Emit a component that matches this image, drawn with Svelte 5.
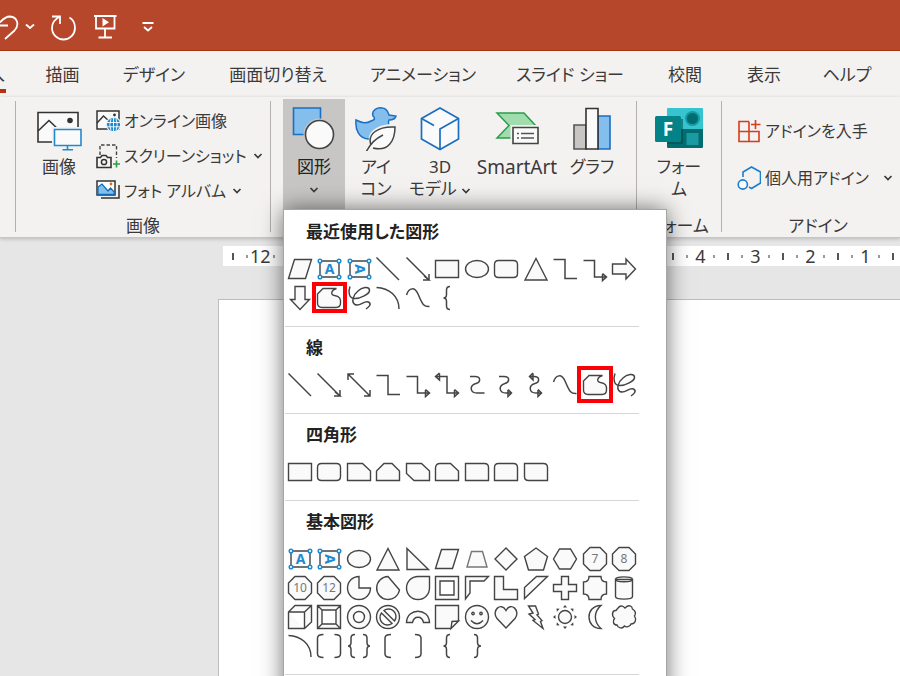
<script>
  const circle = (cx, cy, r) => `M${cx - r} ${cy}a${r} ${r} 0 1 0 ${r * 2} 0a${r} ${r} 0 1 0 ${-r * 2} 0Z`

  const OCTAGON = 'M8 1.5H18L24.5 8V18L18 24.5H8L1.5 18V8Z'

  // open outlines, drawn without a fill
  const lines = {
    line: 'M1.5 1.5L24 24',
    arrow: 'M1.5 1.5L24 24M24 18V24H18L24 24L19 20',
    doubleArrow: 'M2 2L24 24M24 18V24H18M2 8V2H8',
    elbow: 'M1.5 3.5H13V22.5H25',
    elbowArrow: 'M1.5 4.5H12.5V21H24M20.5 17.5L24.5 21L20.5 24.5V18',
    elbowDouble: 'M2 4.5H13V21H24M20.5 17.5L24.5 21L20.5 24.5V18M5.5 1L1.5 4.5L5.5 8V1.5',
    curved: 'M6 4.5H11C17 4.5 17 10 12 11.5C5 13.5 6 21 13 21H20.5',
    curvedArrow: 'M6 4.5H11C17 4.5 17 10 12 11.5C5 13.5 6 21 13 21H18M15 17.5L18.5 21L15 24.5V18',
    curvedDouble: 'M7 4.5H11C17 4.5 17 10 12 11.5C5 13.5 6 21 13 21H18M15 17.5L18.5 21L15 24.5V18M10 1L6.5 4.5L10 8V1.5',
    curve: 'M1.5 10C4 2 10 2 13 9C17 18 18 22 24.5 21.5',
    scribble: 'M4 1.5C2 7 3 13 8 13.5C14 14 24 9 23.5 5C23 1 16 2 12 6C7 10 5 17 9 19.5C14 22 18 15 22.5 17C26 19 23 22 20 24',
    arc: 'M1.5 2.5C14 3 24 11 24 24',
    bracketPair: 'M7.5 1.5Q1.5 1.5 1.5 5V21Q1.5 24.5 7.5 24.5M18.5 1.5Q24.5 1.5 24.5 5V21Q24.5 24.5 18.5 24.5',
    bracePair: 'M9 1.5Q5 1.5 5 5V9.5Q5 13 2 13Q5 13 5 16.5V21Q5 24.5 9 24.5M17 1.5Q21 1.5 21 5V9.5Q21 13 24 13Q21 13 21 16.5V21Q21 24.5 17 24.5',
    leftBracket: 'M16 1.5Q10 1.5 10 5V21Q10 24.5 16 24.5',
    rightBracket: 'M10 1.5Q16 1.5 16 5V21Q16 24.5 10 24.5',
    leftBrace: 'M16 1.5Q12.5 1.5 12.5 5V9.5Q12.5 13 9.5 13Q12.5 13 12.5 16.5V21Q12.5 24.5 16 24.5',
    rightBrace: 'M10 1.5Q13.5 1.5 13.5 5V9.5Q13.5 13 17 13Q13.5 13 13.5 16.5V21Q13.5 24.5 10 24.5'
  }

  const solids = {
    parallelogram: 'M7.5 3.5H24.5L18.5 22.5H1.5Z',
    rect: 'M1.5 4.5H24.5V21.5H1.5Z',
    ellipse: 'M1.5 13a11.5 8.5 0 1 0 23 0a11.5 8.5 0 1 0 -23 0Z',
    roundRect: 'M5.5 4.5H20.5Q24.5 4.5 24.5 8.5V17.5Q24.5 21.5 20.5 21.5H5.5Q1.5 21.5 1.5 17.5V8.5Q1.5 4.5 5.5 4.5Z',
    triangle: 'M13 2.5L24 24H2Z',
    rightArrow: 'M1.5 8H15V3L24.5 13L15 23V18H1.5Z',
    downArrow: 'M8 1.5H18V14.5H22.5L13 24.5L3.5 14.5H8Z',
    freeform: 'M1.5 9L7 3.5H20.5C14.5 5.5 14.5 10 18.5 10.5C23.5 11 25 14 24.5 18Q24.5 22.5 20 22.5H6Q1.5 22.5 1.5 18Z',
    snipOne: 'M1.5 4.5H16.5L24.5 12V21.5H1.5Z',
    snipTwo: 'M1.5 21.5V12L9 4.5H17L24.5 12V21.5Z',
    snipDiagonal: 'M1.5 4.5H16.5L24.5 12V21.5H9L1.5 14.5Z',
    snipRound: 'M1.5 21.5V9Q1.5 4.5 6 4.5H16.5L24.5 12V21.5Z',
    roundOne: 'M1.5 4.5H20.5Q24.5 4.5 24.5 8.5V21.5H1.5Z',
    roundTwo: 'M5.5 4.5H20.5Q24.5 4.5 24.5 8.5V21.5H1.5V8.5Q1.5 4.5 5.5 4.5Z',
    roundDiagonal: 'M1.5 4.5H20.5Q24.5 4.5 24.5 8.5V21.5H5.5Q1.5 21.5 1.5 17.5Z',
    rightTriangle: 'M2 2.5L23.5 23.5H2Z',
    trapezoid: 'M7.5 5.5H18.5L23 21H3Z',
    diamond: 'M13 2L24 13L13 24L2 13Z',
    pentagon: 'M13 2L24.5 10.5L20.5 24H5.5L1.5 10.5Z',
    hexagon: 'M7.5 3H18.5L24.5 13L18.5 23H7.5L1.5 13Z',
    pie: 'M13 1.5A11.5 11.5 0 1 0 24.5 13H13Z',
    chord: 'M13 1.5A11.5 11.5 0 1 0 24.5 15Z',
    teardrop: 'M13 1.5H24.5V13A11.5 11.5 0 1 1 13 1.5Z',
    frame: 'M1.5 1.5H24.5V24.5H1.5ZM6 6V20H20V6Z',
    halfFrame: 'M1.5 1.5H24.5L20 6H6V18L1.5 24Z',
    corner: 'M1.5 1.5H10.5V14.5H24.5V24.5H1.5Z',
    diagonalStripe: 'M13.5 1.5H24.5L1.5 23.5V12.5Z',
    cross: 'M9.5 1.5H16.5V9.5H24.5V16.5H16.5V24.5H9.5V16.5H1.5V9.5H9.5Z',
    plaque: 'M7 1.5H19Q19 7 24.5 7V19Q19 19 19 24.5H7Q7 19 1.5 19V7Q7 7 7 1.5Z',
    can: 'M4.5 4.5V21.5C4.5 25 21.5 25 21.5 21.5V4.5C21.5 1 4.5 1 4.5 4.5C4.5 7.5 21.5 7.5 21.5 4.5Z',
    cube: 'M1.5 8L8 1.5H24.5V18L17.5 24.5H1.5ZM1.5 8H17.5V24.5M17.5 8L24.5 1.5',
    bevel: 'M1.5 1.5H24.5V24.5H1.5ZM6 6H20V20H6ZM1.5 1.5L6 6M24.5 1.5L20 6M24.5 24.5L20 20M1.5 24.5L6 20',
    donut: circle(13, 13, 11.5) + circle(13, 13, 5.5),
    noSymbol: circle(13, 13, 11.5) + 'M9 6.5A7.5 7.5 0 0 1 19.5 17ZM6.5 9A7.5 7.5 0 0 0 17 19.5Z',
    blockArc: 'M1.5 18.5C2 3.5 24 3.5 24.5 18.5H18.5C17 11.5 9 11.5 7.5 18.5Z',
    foldedCorner: 'M1.5 1.5H24.5V17L17 24.5H1.5ZM17 24.5L18 17.5L24.5 17Z',
    smiley: circle(13, 13, 11.5) + circle(9, 9.5, 1.2) + circle(17, 9.5, 1.2) + 'M7 16.5Q13 23 19 16.5Q13 23 7 16.5Z',
    heart: 'M13 24L4 14.5C-2 7 8 -3 13 6.5C18 -3 28 7 22 14.5Z',
    lightning: 'M5.5 2H12.5L15.5 10L14 11L19 16.5L17.5 17.5L20 24.5L10 16.5L12 15.5L6 10L10 9Z',
    moon: 'M19 1.5C3 1.5 3 24.5 19 24.5C11.5 18 11.5 8 19 1.5Z',
    cloud: 'M7 4C10 0 13 3 14 4C18 0 21 2 21.5 5C25 7 25 10 23.5 12C26 16 24 20 20 20C19 23 15 23.5 13.5 22C11 25.5 7 24 6 21C2 21 1.5 17 3.5 14.5C0 11 1.5 6 5 6.5Z',
    heptagon: OCTAGON,
    octagon: OCTAGON,
    decagon: OCTAGON,
    dodecagon: OCTAGON
  }

  const digits = { heptagon: '7', octagon: '8', decagon: '10', dodecagon: '12' }
  const rays = [0, 45, 90, 135, 180, 225, 270, 315]
  const corners = [[4, 5], [23, 5], [4, 21], [23, 21]]

  const sections = [
    {
      title: '最近使用した図形',
      marked: 13,
      tight: true,
      shapes: 'parallelogram textBox verticalTextBox line arrow rect ellipse roundRect triangle elbow elbowArrow rightArrow downArrow freeform scribble arc curve leftBrace'.split(' ')
    },
    {
      title: '線',
      marked: 10,
      shapes: 'line arrow doubleArrow elbow elbowArrow elbowDouble curved curvedArrow curvedDouble curve freeform scribble'.split(' ')
    },
    {
      title: '四角形',
      shapes: 'rect roundRect snipOne snipTwo snipDiagonal snipRound roundOne roundTwo roundDiagonal'.split(' ')
    },
    {
      title: '基本図形',
      shapes: [
        'textBox verticalTextBox ellipse triangle rightTriangle parallelogram trapezoid diamond pentagon hexagon heptagon octagon',
        'decagon dodecagon pie chord teardrop frame halfFrame corner diagonalStripe cross plaque can',
        'cube bevel donut noSymbol blockArc foldedCorner smiley heart lightning sun moon cloud',
        'arc bracketPair bracePair leftBracket rightBracket leftBrace rightBrace'
      ].join(' ').split(' ')
    }
  ]

  const tabs = ['描画', 'デザイン', '画面切り替え', 'アニメーション', 'スライド ショー', '校閲', '表示', 'ヘルプ']
  const rulerUnits = [12, 11, 10, 9, 8, 7, 6, 5, 4, 3, 2, 1]

  let open = $state(true)
</script>

{#snippet chevron()}
  <svg class="chevron" width="10" height="8" viewBox="0 0 10 8" aria-hidden="true"><path d="M1.5 2L5 5.5L8.5 2" /></svg>
{/snippet}

{#snippet shape(name)}
  <svg class="shape" width="26" height="26" viewBox="0 0 26 26" aria-hidden="true">
    {#if name === 'textBox' || name === 'verticalTextBox'}
      <path class="solid" d="M4 5H23V21H4Z" />
      <text
        class="letter"
        x="13.5"
        y="18"
        text-anchor="middle"
        transform={name === 'verticalTextBox' ? 'rotate(90 13.5 13)' : undefined}>A</text>
      {#each corners as [x, y]}
        <circle class="handle" cx={x} cy={y} r="1.8" />
      {/each}
    {:else if name === 'sun'}
      <circle class="solid" cx="13" cy="13" r="6.5" />
      {#each rays as angle}
        <path class="ray" d="M11 3.5L13 1L15 3.5Z" transform={`rotate(${angle} 13 13)`} />
      {/each}
    {:else if lines[name]}
      <path class="open" d={lines[name]} />
    {:else}
      <path class="solid" class:light={name === 'trapezoid'} fill-rule="evenodd" d={solids[name]} />
      {#if digits[name]}
        <text class="digit" x="13" y="17" text-anchor="middle">{digits[name]}</text>
      {/if}
    {/if}
  </svg>
{/snippet}

<div class="window">
  <header class="titlebar">
    <button type="button" class="undo" aria-label="元に戻す">
      <svg width="20" height="28" viewBox="0 0 20 28"><path d="M0 9.5Q5 3.5 10 3.5C17 4 20 11.5 14.5 17.5L5 26M0 12.5H8" /></svg>
      <svg width="10" height="8" viewBox="0 0 10 8"><path d="M1 1.5L5 5L9 1.5" /></svg>
    </button>
    <button type="button" aria-label="やり直し">
      <svg width="25" height="28" viewBox="0 0 25 28"><path d="M9 3.5C4 6 1 10 1 15A11.5 11.5 0 0 0 24 15C24 10.5 22 6.5 18.5 4.5M1 3.5H9V11" /></svg>
    </button>
    <button type="button" aria-label="最初から開始">
      <svg width="27" height="28" viewBox="0 0 27 28">
        <path d="M2 3H24.5M4 3V15.5H22.5V3M13 15.5V24M6.5 24.5H20" />
        <path class="play" d="M10.5 5L17 9.3L10.5 13.5Z" />
      </svg>
    </button>
    <button type="button" aria-label="クイック アクセス ツール バーのカスタマイズ">
      <svg width="26" height="12" viewBox="0 0 26 12"><path d="M7.5 2H18.5M9 6L13 9.5L17 6" /></svg>
    </button>
  </header>

  <nav class="tabs">
    <button type="button" class="tab current"><span>挿入</span></button>
    {#each tabs as tab}
      <button type="button" class="tab">{tab}</button>
    {/each}
  </nav>

  <div class="ribbon">
    <div class="divider first"></div>

    <section class="group pictures">
      <div class="tools">
        <button type="button" class="large">
          <svg class="art" width="46" height="44" viewBox="0 0 46 44">
            <path d="M2 5.5H42V35H2Z" fill="#fafafa" stroke="#333" stroke-width="1.6" />
            <path d="M2 24L13 13.5L24 24" fill="none" stroke="#333" stroke-width="1.6" />
            <circle cx="34" cy="13.5" r="2.8" fill="#333" />
            <path d="M16 20H46V44H16Z" fill="#f3f2f1" />
            <path d="M18.5 22.5H45V38.5H18.5ZM31.5 38.5V42.5M26.5 42.8H37" fill="#fafafa" stroke="#1e8bd0" stroke-width="1.6" />
          </svg>
          <span>画像</span>
        </button>
        <div class="stack">
          <button type="button" class="small">
            <svg width="24" height="24" viewBox="0 0 24 24">
              <path d="M1 2H23V20H1Z" fill="#fafafa" stroke="#333" stroke-width="1.5" />
              <path d="M1 14L7.5 7L13 12" fill="none" stroke="#333" stroke-width="1.4" />
              <circle cx="18.5" cy="6" r="1.4" fill="#333" />
              <circle cx="17.5" cy="15.5" r="7.8" fill="#f3f2f1" />
              <circle cx="17.5" cy="15.5" r="6.6" fill="#1e8bd0" />
              <path d="M11 13.5H24M11 17.8H24M17.5 9V22M15 10Q12.5 15.5 15 21.5M20 10Q22.5 15.5 20 21.5" fill="none" stroke="#fff" stroke-width="0.9" />
            </svg>
            <span>オンライン画像</span>
          </button>
          <button type="button" class="small">
            <svg width="24" height="26" viewBox="0 0 24 26">
              <path d="M4 12V2H20.5V15" fill="none" stroke="#444" stroke-width="1.4" stroke-dasharray="3.5 2" />
              <path d="M1 14.5H4.5L6 12.5H10L11.5 14.5H15V24.5H1Z" fill="#f6f5f4" stroke="#333" stroke-width="1.6" />
              <circle cx="8" cy="19" r="2.6" fill="none" stroke="#333" stroke-width="1.5" />
              <path d="M20.5 17.5V24.5M17 21H24" stroke="#2a9d4a" stroke-width="1.6" />
            </svg>
            <span>スクリーンショット</span>
            {@render chevron()}
          </button>
          <button type="button" class="small">
            <svg width="24" height="24" viewBox="0 0 24 24">
              <path d="M5 19H23V6" fill="none" stroke="#333" stroke-width="1.5" />
              <path d="M1 2H19V16H1Z" fill="#fff" stroke="#333" stroke-width="1.5" />
              <path d="M2 8L6 5L12 12L14.5 9L18.2 13V15.3H2Z" fill="#83beec" stroke="#0f6cbd" stroke-width="1.2" />
              <circle cx="15" cy="5" r="1.4" fill="#e06a1c" />
            </svg>
            <span>フォト アルバム</span>
            {@render chevron()}
          </button>
        </div>
      </div>
      <p class="caption">画像</p>
    </section>

    <div class="divider"></div>

    <section class="group illustrations">
      <div class="tools">
        <div class="picker">
          <button type="button" class="large" class:pressed={open} aria-expanded={open} onclick={() => (open = !open)}>
            <svg class="art" width="44" height="44" viewBox="0 0 44 44">
              <path d="M1.5 1H28.5V27.5H1.5Z" fill="#83beec" stroke="#1a6fc0" stroke-width="1.6" />
              <circle cx="27.5" cy="27.5" r="16" fill="#c8c6c4" />
              <circle cx="27.5" cy="27.5" r="14" fill="#fafafa" stroke="#444" stroke-width="1.6" />
            </svg>
            <span>図形</span>
            <span class="below">{@render chevron()}</span>
          </button>

          {#if open}
            <div class="menu">
              {#each sections as section}
                <section class="shapes">
                  <h2>{section.title}</h2>
                  <div class="grid">
                    {#each section.shapes as name, i}
                      <button
                        type="button"
                        class="cell"
                        class:marked={section.marked === i}
                        class:tight={section.tight}
                        aria-label={name}
                      >
                        {@render shape(name)}
                      </button>
                    {/each}
                  </div>
                </section>
              {/each}
            </div>
          {/if}
        </div>

        <button type="button" class="large">
          <svg class="art" width="44" height="44" viewBox="0 0 44 44">
            <path d="M2 13C8 16 12 17 17 14C20 13 22 12 19 9C17 3 24 0 28 1C33 1 34 5 35 8L42 9Q41 13 35 13C33 17 36 19 37 23C34 32 24 33 14 32C5 31 1 23 2 13Z" fill="#83beec" stroke="#1a6fc0" stroke-width="1.5" />
            <path d="M11 46L16 38C11 26 22 16 43 17C43 34 37 44 20 43Z" fill="#f3f2f1" />
            <path d="M17 38C13 27 24 19 41 20C41 34 34 45 19 41M12 45C17 36 21 32 29 28" fill="#fafafa" stroke="#444" stroke-width="1.5" />
          </svg>
          <span>アイ<br />コン</span>
        </button>
        <button type="button" class="large model">
          <svg class="art" width="44" height="44" viewBox="0 0 44 44">
            <path d="M22 1L40.5 11.5V32L22 42.5L3.5 32V11.5Z" fill="#fafafa" stroke="#1a6fc0" stroke-width="1.7" />
            <path d="M40.5 11.5L22 22V42.5M3.5 11.5L16 18.5" fill="none" stroke="#1a6fc0" stroke-width="1.7" />
          </svg>
          <span>3D<br />モデル {@render chevron()}</span>
        </button>
        <button type="button" class="large smart">
          <svg class="art" width="44" height="44" viewBox="0 0 44 44">
            <path d="M2 6H29L41 19L29 31H2L14 18.5Z" fill="#a0dcae" stroke="#2a9d4a" stroke-width="1.5" />
            <path d="M15.5 18H44V40H15.5Z" fill="#f3f2f1" />
            <path d="M18 20.5H43V36.5H18Z" fill="#fafafa" stroke="#444" stroke-width="1.6" />
            <path d="M22 26.5H24M26 26.5H39M22 31H24M26 31H39" stroke="#555" stroke-width="1.3" />
          </svg>
          <span>SmartArt</span>
        </button>
        <button type="button" class="large">
          <svg class="art" width="44" height="44" viewBox="0 0 44 44">
            <path d="M4 18H16V42H4Z" fill="#c8c6c4" stroke="#555" stroke-width="1.6" />
            <path d="M28 9H40V42H28Z" fill="#83beec" stroke="#1a6fc0" stroke-width="1.6" />
            <path d="M16 1.5H28V42H16Z" fill="#fafafa" stroke="#333" stroke-width="1.6" />
          </svg>
          <span>グラフ</span>
        </button>
      </div>
      <p class="caption">図</p>
    </section>

    <div class="divider"></div>

    <section class="group forms">
      <div class="tools">
        <button type="button" class="large">
          <svg class="art" width="48" height="44" viewBox="0 0 48 44">
            <path d="M12 2Q12 1 13 1H47Q48 1 48 2V22H12Z" fill="#36c5ce" />
            <path d="M12 22H48V40Q48 41 47 41H13Q12 41 12 40Z" fill="#036c70" />
            <circle cx="37.5" cy="11.5" r="7.5" fill="#149ba3" />
            <circle cx="37.5" cy="11.5" r="5.5" fill="#036c70" />
            <path d="M31.5 26H43.5V38H31.5Z" fill="#1a9ba1" />
            <path d="M12 12H28V37H12Z" fill="#024a4d" opacity="0.55" />
            <rect x="0" y="9" width="26" height="26" rx="1.5" fill="#038387" />
            <text x="13" y="29" text-anchor="middle" class="forms-letter">F</text>
          </svg>
          <span>フォー<br />ム</span>
        </button>
      </div>
      <p class="caption">フォーム</p>
    </section>

    <div class="divider"></div>

    <section class="group addins">
      <div class="tools">
        <div class="stack">
          <button type="button" class="small">
            <svg width="24" height="24" viewBox="0 0 24 24">
              <path d="M12 2.5H2V22.5H22V12.5H2M12 2.5V22.5M18.5 1V10M14 5.5H23.5" fill="none" stroke="#d83b1a" stroke-width="1.6" />
            </svg>
            <span>アドインを入手</span>
          </button>
          <button type="button" class="small">
            <svg width="24" height="24" viewBox="0 0 24 24">
              <path d="M6 11V6L14.5 1L23.5 6V17L14.5 22.5L12 21" fill="none" stroke="#1a7fd0" stroke-width="1.6" />
              <circle cx="5.8" cy="18.5" r="4.6" fill="#fafafa" stroke="#1a7fd0" stroke-width="1.6" />
            </svg>
            <span>個人用アドイン</span>
            {@render chevron()}
          </button>
        </div>
      </div>
      <p class="caption">アドイン</p>
    </section>
  </div>

  <main class="workspace">
    <div class="ruler">
      {#each rulerUnits as unit}
        <div class="unit"><i class="tick"></i><i class="dot"></i><span>{unit}</span><i class="dot"></i></div>
      {/each}
      <div class="unit"><i class="tick"></i></div>
    </div>
    <div class="slide"></div>
  </main>
</div>

<style>
  :global(body) {
    margin: 0;
  }

  .window {
    display: flex;
    flex-direction: column;
    height: 100vh;
    overflow: hidden;
    background: #e6e6e6;
    color: #3b3a39;
    font-family: 'Noto Sans', 'Noto Sans CJK JP', sans-serif;
    font-size: 17px;
    line-height: 22px;
    font-feature-settings: 'palt';
  }

  button {
    border: none;
    padding: 0;
    background: none;
    color: inherit;
    font: inherit;
    font-feature-settings: inherit;
    white-space: nowrap;
    cursor: pointer;
  }

  svg {
    flex: none;
  }

  .titlebar {
    display: flex;
    align-items: center;
    gap: 16px;
    flex: none;
    box-sizing: border-box;
    height: 51px;
    padding-top: 4px;
    background: #b7472a;
    border-bottom: 1px solid #a83210;
  }

  .titlebar button {
    display: flex;
    align-items: center;
  }

  .titlebar .undo {
    gap: 5px;
  }

  .titlebar path {
    fill: none;
    stroke: #fff;
    stroke-width: 1.8;
  }

  .titlebar .play {
    fill: #fff;
    stroke: none;
  }

  .tabs {
    display: grid;
    grid-template-columns: 22px 81fr 102fr 146fr 144fr 150fr 80fr 78fr 88fr;
    flex: none;
    height: 46px;
    padding-right: 9px;
    background: #f3f2f1;
  }

  .tab {
    padding-top: 2px;
  }

  .tab.current {
    display: flex;
    align-items: center;
    justify-content: flex-end;
    width: 6px;
    height: 42px;
    box-sizing: border-box;
    overflow: hidden;
    border-bottom: 4px solid #b7300f;
    padding: 8px 1px 0 0;
  }

  .ribbon {
    display: flex;
    flex: none;
    padding-top: 2px;
    background: #f3f2f1;
    border-bottom: 1px solid #c8c6c4;
    position: relative;
    z-index: 1;
    box-shadow: 0 1px 4px rgba(0, 0, 0, 0.2);
  }

  .divider {
    flex: none;
    width: 1px;
    margin: 2px 0 5px;
    background: #b3b0ad;
  }

  .first {
    margin-left: 15px;
  }

  .group {
    display: flex;
    flex-direction: column;
    box-sizing: border-box;
    flex: none;
  }

  .pictures {
    width: 254px;
  }

  .illustrations {
    width: 365px;
  }

  .forms {
    width: 84px;
  }

  .addins {
    flex: 1 0 192px;
  }

  .tools {
    display: flex;
    height: 110px;
  }

  .illustrations .tools {
    padding-left: 12px;
  }

  .forms .tools {
    justify-content: center;
  }

  .caption {
    margin: 6px 0 0;
    text-align: center;
  }

  .large {
    display: flex;
    flex-direction: column;
    align-items: center;
    box-sizing: border-box;
    width: 62px;
    height: 110px;
    padding-top: 8px;
  }

  .pictures .large {
    width: 78px;
    padding-left: 8px;
    margin-right: 2px;
  }

  .large.model {
    width: 66px;
  }

  .large.smart {
    width: 88px;
    font-size: 19px;
  }

  .pressed {
    background: #c8c6c4;
    color: #222;
  }

  .art {
    margin-bottom: 5px;
  }

  .below {
    line-height: 20px;
  }

  .chevron path {
    fill: none;
    stroke: #3b3a39;
    stroke-width: 1.7;
  }

  .stack {
    display: flex;
    flex-direction: column;
    padding-top: 4px;
  }

  .addins .stack {
    gap: 12px;
    padding: 14px 0 0 15px;
  }

  .small {
    display: flex;
    align-items: center;
    gap: 4px;
    height: 35px;
    font-size: 16px;
  }

  .small .chevron {
    margin-left: 2px;
  }

  .addins .small .chevron {
    margin-left: 10px;
  }

  .picker {
    position: relative;
  }

  .menu {
    position: absolute;
    top: 111px;
    left: 1px;
    z-index: 2;
    box-sizing: border-box;
    width: 382px;
    padding: 1px 27px 40px 1px;
    background: #fff;
    box-shadow: 0 0 0 1px #a6a6a6, 0 0 22px rgba(0, 0, 0, 0.6);
  }

  .shapes {
    padding: 7px 0 14px;
    border-bottom: 1px solid #d6d6d6;
  }

  h2 {
    margin: 0 0 8px;
    padding-left: 21px;
    color: #222;
    font-size: 17px;
    font-weight: 700;
    line-height: 28px;
  }

  .grid {
    display: grid;
    grid-template-columns: repeat(12, 1fr);
    grid-auto-rows: 29px;
  }

  .cell {
    display: flex;
    align-items: center;
    justify-content: center;
    position: relative;
  }

  .marked::after {
    content: '';
    position: absolute;
    inset: -4px -3px;
    border: 4px solid #fb0007;
  }

  .marked.tight::after {
    inset: -1px -3px;
  }

  .shape {
    overflow: visible;
  }

  .solid {
    fill: #fafafa;
    stroke: #444;
    stroke-width: 1.4;
  }

  .light {
    stroke: #777;
  }

  .open {
    fill: none;
    stroke: #444;
    stroke-width: 1.5;
  }

  .ray {
    fill: #444;
  }

  .letter {
    fill: #1e8bd0;
    font-size: 14px;
    font-weight: 700;
  }

  .handle {
    fill: #fff;
    stroke: #1e8bd0;
    stroke-width: 1.5;
  }

  .digit {
    fill: #777;
    font-size: 12px;
  }

  .forms-letter {
    fill: #fff;
    font-size: 19px;
    font-weight: 700;
  }

  .workspace {
    display: flex;
    flex-direction: column;
    flex: 1;
    min-height: 0;
    padding-top: 8px;
  }

  .ruler {
    display: flex;
    flex: none;
    height: 20px;
    margin-left: 223px;
    padding-left: 3px;
    overflow: hidden;
    background: #fff;
    font-size: 18px;
    line-height: 20px;
  }

  .unit {
    display: grid;
    grid-template-columns: repeat(4, 1fr);
    align-items: center;
    justify-items: center;
    flex: none;
    width: 55px;
  }

  .unit span {
    margin: 0 -6px;
  }

  .tick {
    width: 2px;
    height: 7px;
    background: #555;
  }

  .dot {
    width: 2px;
    height: 3px;
    background: #999;
  }

  .slide {
    flex: 1;
    margin: 33px 0 0 218px;
    border: 1px solid #bdbdbd;
    border-width: 1px 0 0 1px;
    background: #fff;
  }
</style>
